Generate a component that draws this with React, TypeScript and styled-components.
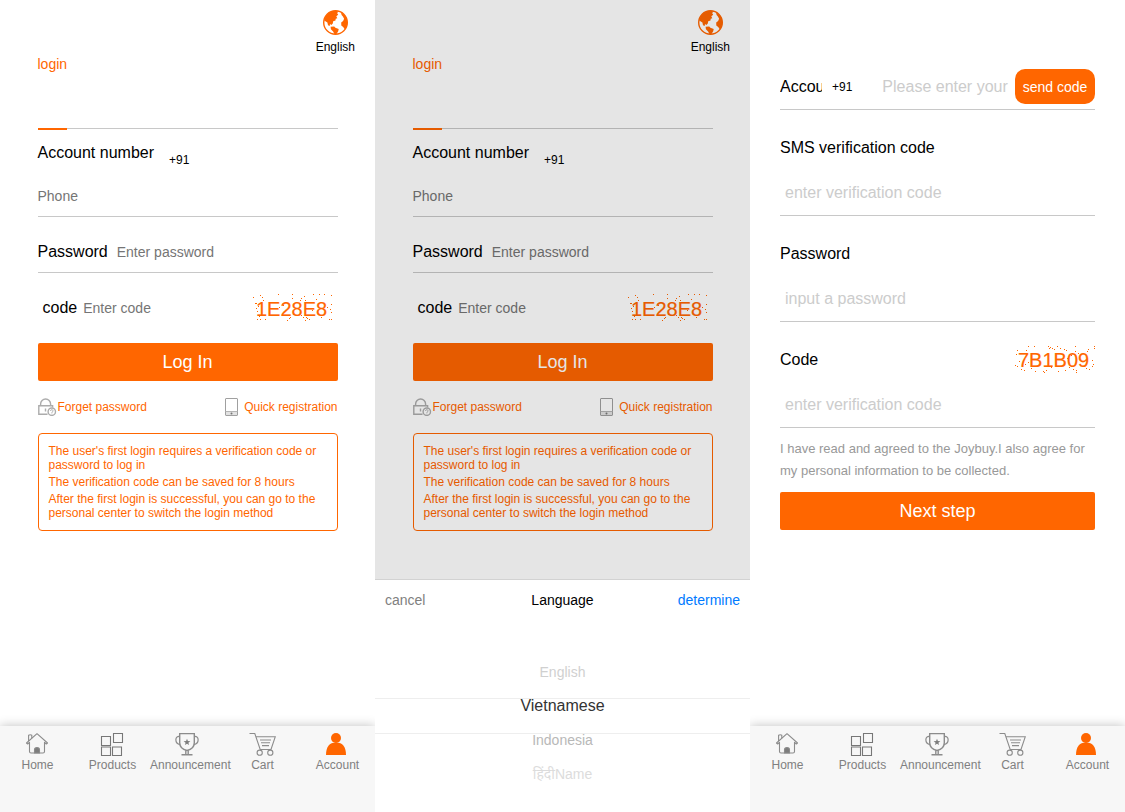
import React, { useId } from "react";
import styled, { createGlobalStyle } from "styled-components";

const ORANGE = "#ff6600";

const GlobalStyle = createGlobalStyle`
  *, *::before, *::after { box-sizing: border-box; }
  body {
    margin: 0;
    background: #fff;
    color: #000;
    font-family: "Liberation Sans", Arial, "Noto Sans", sans-serif;
  }
  button, input { font-family: inherit; }
  p, h2, ul { margin: 0; padding: 0; }
`;

const Screens = styled.div`
  display: flex;
  min-height: 100vh;
`;

const Screen = styled.section`
  flex: 1 1 0;
  min-width: 0;
  display: flex;
  flex-direction: column;
  overflow: hidden;
  background: #fff;
`;

const Body = styled.div`
  position: relative;
  flex: 1;
`;

const Dim = styled.div`
  position: absolute;
  inset: 0;
  background: rgba(0, 0, 0, 0.1);
`;

/* login */

const TopBar = styled.header`
  display: flex;
  justify-content: flex-end;
  padding: 10px 20px 0;
`;

const LanguageButton = styled.button`
  display: flex;
  flex-direction: column;
  align-items: center;
  gap: 3px;
  padding: 0;
  border: 0;
  background: none;
  color: #000;
  font-size: 12px;
  line-height: 18px;
  cursor: pointer;
`;

const LoginForm = styled.form`
  padding: 0 10%;
`;

const Tabs = styled.div`
  display: flex;
  height: 73px;
  border-bottom: 1px solid #c8c8c8;
`;

const Tab = styled.button`
  display: flex;
  align-items: flex-start;
  height: 74px;
  padding: 0;
  border: 0;
  border-bottom: 2px solid ${ORANGE};
  background: none;
  color: ${ORANGE};
  font-size: 14px;
  line-height: 16px;
`;

const Block = styled.div`
  border-bottom: 1px solid #c8c8c8;
`;

const AccountHead = styled.div`
  display: flex;
  gap: 15px;
  padding-top: 14px;
  height: 41px;
`;

const Label = styled.label`
  font-size: 16px;
  line-height: 20px;
  white-space: nowrap;
`;

const Prefix = styled.span<{ $low?: boolean }>`
  align-self: ${(p) => (p.$low ? "flex-end" : "center")};
  font-size: 12px;
  line-height: 20px;
`;

const Input = styled.input`
  flex: 1;
  width: 100%;
  min-width: 0;
  height: 40px;
  padding: 0;
  border: 0;
  outline: 0;
  background: none;
  font-size: 14px;
  &::placeholder { color: #757575; opacity: 1; }
`;

const PhoneRow = styled.div`
  display: flex;
  padding-top: 6px;
`;

const InlineRow = styled.div<{ $line?: boolean; $inset?: number; $gap: number }>`
  display: flex;
  align-items: center;
  gap: ${(p) => p.$gap}px;
  padding: 15px ${(p) => p.$inset ?? 0}px 0;
  border-bottom: ${(p) => (p.$line ? "1px solid #c8c8c8" : "0")};
`;

const Submit = styled.button<{ $top: number }>`
  display: block;
  width: 100%;
  height: 38px;
  margin-top: ${(p) => p.$top}px;
  padding: 0;
  border: 0;
  border-radius: 2px;
  background: ${ORANGE};
  color: #fff;
  font-size: 18px;
  cursor: pointer;
`;

const Links = styled.div`
  display: flex;
  justify-content: space-between;
  margin-top: 17px;
`;

const IconLink = styled.a<{ $gap: number }>`
  display: flex;
  align-items: center;
  gap: ${(p) => p.$gap}px;
  height: 18px;
  color: ${ORANGE};
  font-size: 12px;
  text-decoration: none;
`;

const Notice = styled.div`
  display: flex;
  flex-direction: column;
  gap: 3px;
  margin-top: 17px;
  padding: 10px;
  border: 1px solid ${ORANGE};
  border-radius: 4px;
  color: ${ORANGE};
  font-size: 12px;
  line-height: 14px;
`;

const CaptchaBox = styled.svg`
  display: block;
  flex: none;
  overflow: visible;
`;

/* register */

const RegisterForm = styled.form`
  padding: 69px 30px 0;
`;

const PhoneLine = styled(Block)`
  display: flex;
  align-items: center;
  padding-bottom: 5px;
`;

const ClippedLabel = styled(Label)`
  width: 42px;
  margin-right: 10px;
  overflow: hidden;
`;

const BigInput = styled(Input)`
  height: 44px;
  padding: 0 5px;
  font-size: 16px;
  &::placeholder { color: #ccc; }
`;

const PhoneInput = styled(BigInput)`
  height: 35px;
  margin-left: 25px;
`;

const SendButton = styled.button`
  flex: none;
  width: 80px;
  height: 35px;
  padding: 0;
  border: 0;
  border-radius: 10px;
  background: ${ORANGE};
  color: #fff;
  font-size: 14px;
  cursor: pointer;
`;

const FieldHead = styled.div`
  display: flex;
  justify-content: space-between;
  align-items: center;
  height: 32px;
  margin-top: 22px;
  svg { align-self: flex-start; }
`;

const FieldBody = styled.div`
  display: flex;
  padding-top: 7px;
`;

const Agreement = styled.p`
  margin-top: 10px;
  color: #999;
  font-size: 13px;
  line-height: 22px;
`;

/* bottom navigation */

const NavBar = styled.nav`
  display: flex;
  min-height: 86px;
  padding-top: 6px;
  background: #f7f7f7;
  box-shadow: 0 0 10px rgba(0, 0, 0, 0.25);
`;

const NavItem = styled.a`
  flex: 1 1 0;
  min-width: 0;
  color: #808080;
  font-size: 12px;
  line-height: 16px;
  text-align: center;
  text-decoration: none;
  white-space: nowrap;
  svg { display: block; margin: 0 auto 1px; }
`;

/* language sheet */

const Sheet = styled.div`
  height: 233px;
  border-top: 1px solid #d2d2d2;
  background: #fff;
  overflow: hidden;
`;

const SheetHead = styled.div`
  display: grid;
  grid-template-columns: 1fr auto 1fr;
  align-items: center;
  height: 39px;
  padding: 0 10px;
`;

const SheetTitle = styled.h2`
  font-size: 14px;
  font-weight: 400;
`;

const SheetAction = styled.button<{ $primary?: boolean }>`
  justify-self: ${(p) => (p.$primary ? "end" : "start")};
  padding: 0;
  border: 0;
  background: none;
  color: ${(p) => (p.$primary ? "#007aff" : "#808080")};
  font-size: 14px;
  cursor: pointer;
`;

const Picker = styled.div`
  position: relative;
  padding-top: 36px;
`;

const PickerBand = styled.div`
  position: absolute;
  top: 79px;
  left: 0;
  right: 0;
  height: 36px;
  border: solid #eee;
  border-width: 1px 0;
`;

const Options = styled.ul`
  list-style: none;
`;

const Option = styled.li<{ $tone: string; $active?: boolean }>`
  height: 34px;
  color: ${(p) => p.$tone};
  font-size: ${(p) => (p.$active ? 16 : 14)}px;
  line-height: 34px;
  text-align: center;
`;

const Globe = () => (
  <svg width="25" height="25" viewBox="0 0 25 25" aria-hidden="true">
    <circle cx="12.5" cy="12.5" r="11.8" fill="#fff" stroke={ORANGE} strokeWidth="1.4" />
    <path
      fill={ORANGE}
      d="M1.2 10.500C2 5 6.500 1 13 .8l2.200.6-1 1.900 1 1.500-1.900 1.500 1 1.900-1.600.5-.2 1.900-2.300.7-.4 2.100-1.500 1.700-1.300-1-.3 2-1.700-.9-.6-2.600z"
    />
    <path fill={ORANGE} d="M7.600 16.800l3.600-.3 1.200 1.300 3.300 1.300-.5 2.200-1.700 2.700-2.100.1-1.300-2.500-2.200-2.300z" />
    <path fill={ORANGE} d="M18 2.500c4 1.700 6.300 5.600 6.400 10-.1 2.800-1 5.100-2.500 7l-1.700-2.400-1.900-1.600-.1-2.900 1.900-1.600 1-2.200-1.200-2.400-1.300-1.500z" />
  </svg>
);

const LockIcon = () => (
  <svg width="19" height="18" viewBox="0 0 19 18" fill="none" stroke="#acacac" strokeWidth="1.400" aria-hidden="true">
    <path d="M2.600 7.500V6a5 5 0 0 1 10 0v1.500" />
    <path d="M9.500 16.300H.8V7.800h13.800v1.700" />
    <path d="M7.500 10.500v3" />
    <circle cx="13.800" cy="13.700" r="3.700" fill="#fff" />
    <path d="M12.600 13a1.200 1.200 0 1 1 1.600 1l-.4.800M13.800 15.600v.6" strokeWidth="1" />
  </svg>
);

const PhoneIcon = () => (
  <svg width="13" height="18" viewBox="0 0 13 18" aria-hidden="true">
    <rect x=".5" y=".5" width="12" height="17" rx=".5" fill="#fff" stroke="#a0a0a0" />
    <path d="M1 14h11v3H1z" fill="#e2e2e2" />
    <path d="M.5 13.500h12" stroke="#b4b4b4" />
    <circle cx="6.500" cy="15.500" r="1" fill="#777" />
  </svg>
);

const line = { fill: "none", stroke: "#8c8c8c", strokeWidth: 1.1 } as const;

const HomeIcon = () => (
  <svg width="25" height="24" viewBox="0 0 25 24" {...line} aria-hidden="true">
    <path d="M1.500 11 12 1.700 22.500 11l-1.200 1-1.800-1.600V19.500q0 1.500-1.500 1.500H6q-1.500 0-1.500-1.500v-9.100L2.700 12z" strokeLinejoin="round" />
    <path d="M3.600 9V3.300q1.700-1.200 3.200 0v3" />
    <path d="M9.500 21v-3.200q0-2.300 2.500-2.300t2.500 2.300V21z" fill="#7d7d7d" />
  </svg>
);

const ProductsIcon = () => (
  <svg width="25" height="24" viewBox="0 0 25 24" {...line} stroke="#777" aria-hidden="true">
    <path d="M1.500 4.500h9v9h-9zM13.500 1.500h9v9h-9zM1.500 15h9v8.500h-9zM12.500 15h9v8.500h-9z" />
  </svg>
);

const TrophyIcon = () => (
  <svg width="25" height="24" viewBox="0 0 25 24" {...line} strokeWidth={1.4} aria-hidden="true">
    <path d="M4.700 1.600h14.600v9.200q0 6-7.300 7.700-7.300-1.700-7.300-7.700z" />
    <path d="M4.700 4.400C-.2 3.600-.8 11.500 5.200 12.700M19.300 4.400c4.900-.8 5.500 7.100-.5 8.300" strokeWidth="1.200" />
    <path d="M10.800 18.300v3.800M13.200 18.300v3.800M6.500 22.800h11" />
    <path d="m12 6.800.9 2.300 2.500.1-2 1.500.7 2.400-2.100-1.400-2.100 1.400.7-2.400-2-1.500 2.500-.1z" fill="#7d7d7d" stroke="none" />
  </svg>
);

const CartIcon = () => (
  <svg width="27" height="24" viewBox="0 0 27 24" {...line} aria-hidden="true">
    <path d="M.5 1.500h5.300l5.400 16H22l4.300-12.800H7" />
    <path d="M11 8h11M12 10.800h9M13 13.600h7" />
    <circle cx="10.700" cy="20.700" r="2.600" />
    <circle cx="21.300" cy="20.700" r="2.600" />
  </svg>
);

const AccountIcon = () => (
  <svg width="25" height="24" viewBox="0 0 25 24" fill={ORANGE} aria-hidden="true">
    <circle cx="11" cy="6" r="5" />
    <path d="M1 23c0-8 3.200-12.500 10-12.500S21 15 21 23z" />
  </svg>
);

type Dot = [number, number];

const dotsA: Dot[] = [
  [0, 4], [7, 2], [9, 4], [2, 10], [3, 10], [3, 15], [5, 13], [4, 18], [4, 26], [6, 23], [7, 26], [12, 26], [10, 7],
  [25, 1], [39, 1], [39, 5], [47, 7], [48, 5], [51, 3], [52, 7], [60, 1], [66, 1], [71, 1], [78, 2], [78, 11],
  [74, 14], [77, 16], [78, 19], [76, 26], [78, 26], [68, 24], [56, 26], [53, 24], [54, 25], [52, 27], [48, 22],
  [50, 24], [34, 27], [36, 25], [37, 24], [40, 21], [43, 22], [24, 9], [26, 14], [58, 9], [59, 17], [30, 12], [63, 6],
];

const dotsB: Dot[] = [
  [13, 2], [19, 2], [11, 6], [2, 6], [1, 10], [0, 21], [2, 22], [4, 17], [6, 25], [9, 26], [16, 24], [20, 27],
  [28, 27], [29, 28], [31, 26], [33, 2], [34, 4], [37, 4], [39, 5], [42, 2], [35, 3], [45, 4], [49, 5], [51, 6],
  [60, 2], [60, 7], [63, 9], [72, 7], [73, 5], [79, 2], [79, 4], [77, 16], [78, 20], [77, 22], [74, 25], [71, 24],
  [61, 28], [61, 26], [58, 25], [54, 23], [50, 26], [43, 27], [36, 23], [13, 18], [10, 20], [24, 17], [52, 14], [56, 11],
];

const Captcha = ({ text, dots }: { text: string; dots: Dot[] }) => (
  <CaptchaBox width="80" height="30" viewBox="0 0 80 30" role="img" aria-label={text}>
    <text x="3" y="23" fontSize="20" fill={ORANGE} stroke={ORANGE} strokeWidth="0.200">
      {text}
    </text>
    {dots.map(([x, y], i) => (
      <rect key={i} x={x} y={y} width="1" height="1" fill={ORANGE} />
    ))}
  </CaptchaBox>
);

const Login = () => {
  const id = useId();
  return (
    <>
      <TopBar>
        <LanguageButton type="button">
          <Globe />
          English
        </LanguageButton>
      </TopBar>
      <LoginForm onSubmit={(e) => e.preventDefault()}>
        <Tabs>
          <Tab type="button">login</Tab>
        </Tabs>
        <Block>
          <AccountHead>
            <Label htmlFor={`${id}-phone`}>Account number</Label>
            <Prefix $low>+91</Prefix>
          </AccountHead>
          <PhoneRow>
            <Input id={`${id}-phone`} type="tel" placeholder="Phone" />
          </PhoneRow>
        </Block>
        <InlineRow $line $gap={9}>
          <Label htmlFor={`${id}-password`}>Password</Label>
          <Input id={`${id}-password`} type="password" placeholder="Enter password" />
        </InlineRow>
        <InlineRow $inset={5} $gap={6}>
          <Label htmlFor={`${id}-code`}>code</Label>
          <Input id={`${id}-code`} type="text" placeholder="Enter code" />
          <Captcha text="1E28E8" dots={dotsA} />
        </InlineRow>
        <Submit type="submit" $top={15}>Log In</Submit>
        <Links>
          <IconLink href="#forgot" $gap={1}>
            <LockIcon />
            Forget password
          </IconLink>
          <IconLink href="#register" $gap={6}>
            <PhoneIcon />
            Quick registration
          </IconLink>
        </Links>
        <Notice>
          <p>The user's first login requires a verification code or password to log in</p>
          <p>The verification code can be saved for 8 hours</p>
          <p>After the first login is successful, you can go to the personal center to switch the login method</p>
        </Notice>
      </LoginForm>
    </>
  );
};

type FieldProps = { label: string; placeholder: string; type?: string; extra?: React.ReactNode };

const Field = ({ label, placeholder, type = "text", extra }: FieldProps) => {
  const id = useId();
  return (
    <Block>
      <FieldHead>
        <Label htmlFor={id}>{label}</Label>
        {extra}
      </FieldHead>
      <FieldBody>
        <BigInput id={id} type={type} placeholder={placeholder} />
      </FieldBody>
    </Block>
  );
};

const Register = () => {
  const id = useId();
  return (
    <RegisterForm onSubmit={(e) => e.preventDefault()}>
      <PhoneLine>
        <ClippedLabel htmlFor={id}>Accou</ClippedLabel>
        <Prefix>+91</Prefix>
        <PhoneInput id={id} type="tel" placeholder="Please enter your" />
        <SendButton type="button">send code</SendButton>
      </PhoneLine>
      <Field label="SMS verification code" placeholder="enter verification code" />
      <Field label="Password" placeholder="input a password" type="password" />
      <Field
        label="Code"
        placeholder="enter verification code"
        extra={<Captcha text="7B1B09" dots={dotsB} />}
      />
      <Agreement>
        I have read and agreed to the Joybuy.I also agree for my personal information to be collected.
      </Agreement>
      <Submit type="submit" $top={10}>Next step</Submit>
    </RegisterForm>
  );
};

const navItems = [
  { label: "Home", Icon: HomeIcon },
  { label: "Products", Icon: ProductsIcon },
  { label: "Announcement", Icon: TrophyIcon },
  { label: "Cart", Icon: CartIcon },
  { label: "Account", Icon: AccountIcon },
];

const BottomNav = () => (
  <NavBar>
    {navItems.map(({ label, Icon }) => (
      <NavItem key={label} href={`#${label.toLowerCase()}`}>
        <Icon />
        {label}
      </NavItem>
    ))}
  </NavBar>
);

const languages = [
  { name: "English", tone: "#d0d0d0" },
  { name: "Vietnamese", tone: "#333", active: true },
  { name: "Indonesia", tone: "#b8b8b8" },
  { name: "हिंदीName", tone: "#dcdcdc" },
];

const LanguageSheet = () => (
  <Sheet>
    <SheetHead>
      <SheetAction type="button">cancel</SheetAction>
      <SheetTitle>Language</SheetTitle>
      <SheetAction type="button" $primary>determine</SheetAction>
    </SheetHead>
    <Picker>
      <Options role="listbox" aria-label="Language">
        {languages.map(({ name, tone, active }) => (
          <Option key={name} role="option" aria-selected={!!active} $tone={tone} $active={active}>
            {name}
          </Option>
        ))}
      </Options>
      <PickerBand />
    </Picker>
  </Sheet>
);

export default function App() {
  return (
    <>
      <GlobalStyle />
      <Screens>
        <Screen>
          <Body>
            <Login />
          </Body>
          <BottomNav />
        </Screen>
        <Screen>
          <Body>
            <Login />
            <Dim />
          </Body>
          <LanguageSheet />
        </Screen>
        <Screen>
          <Body>
            <Register />
          </Body>
          <BottomNav />
        </Screen>
      </Screens>
    </>
  );
}
